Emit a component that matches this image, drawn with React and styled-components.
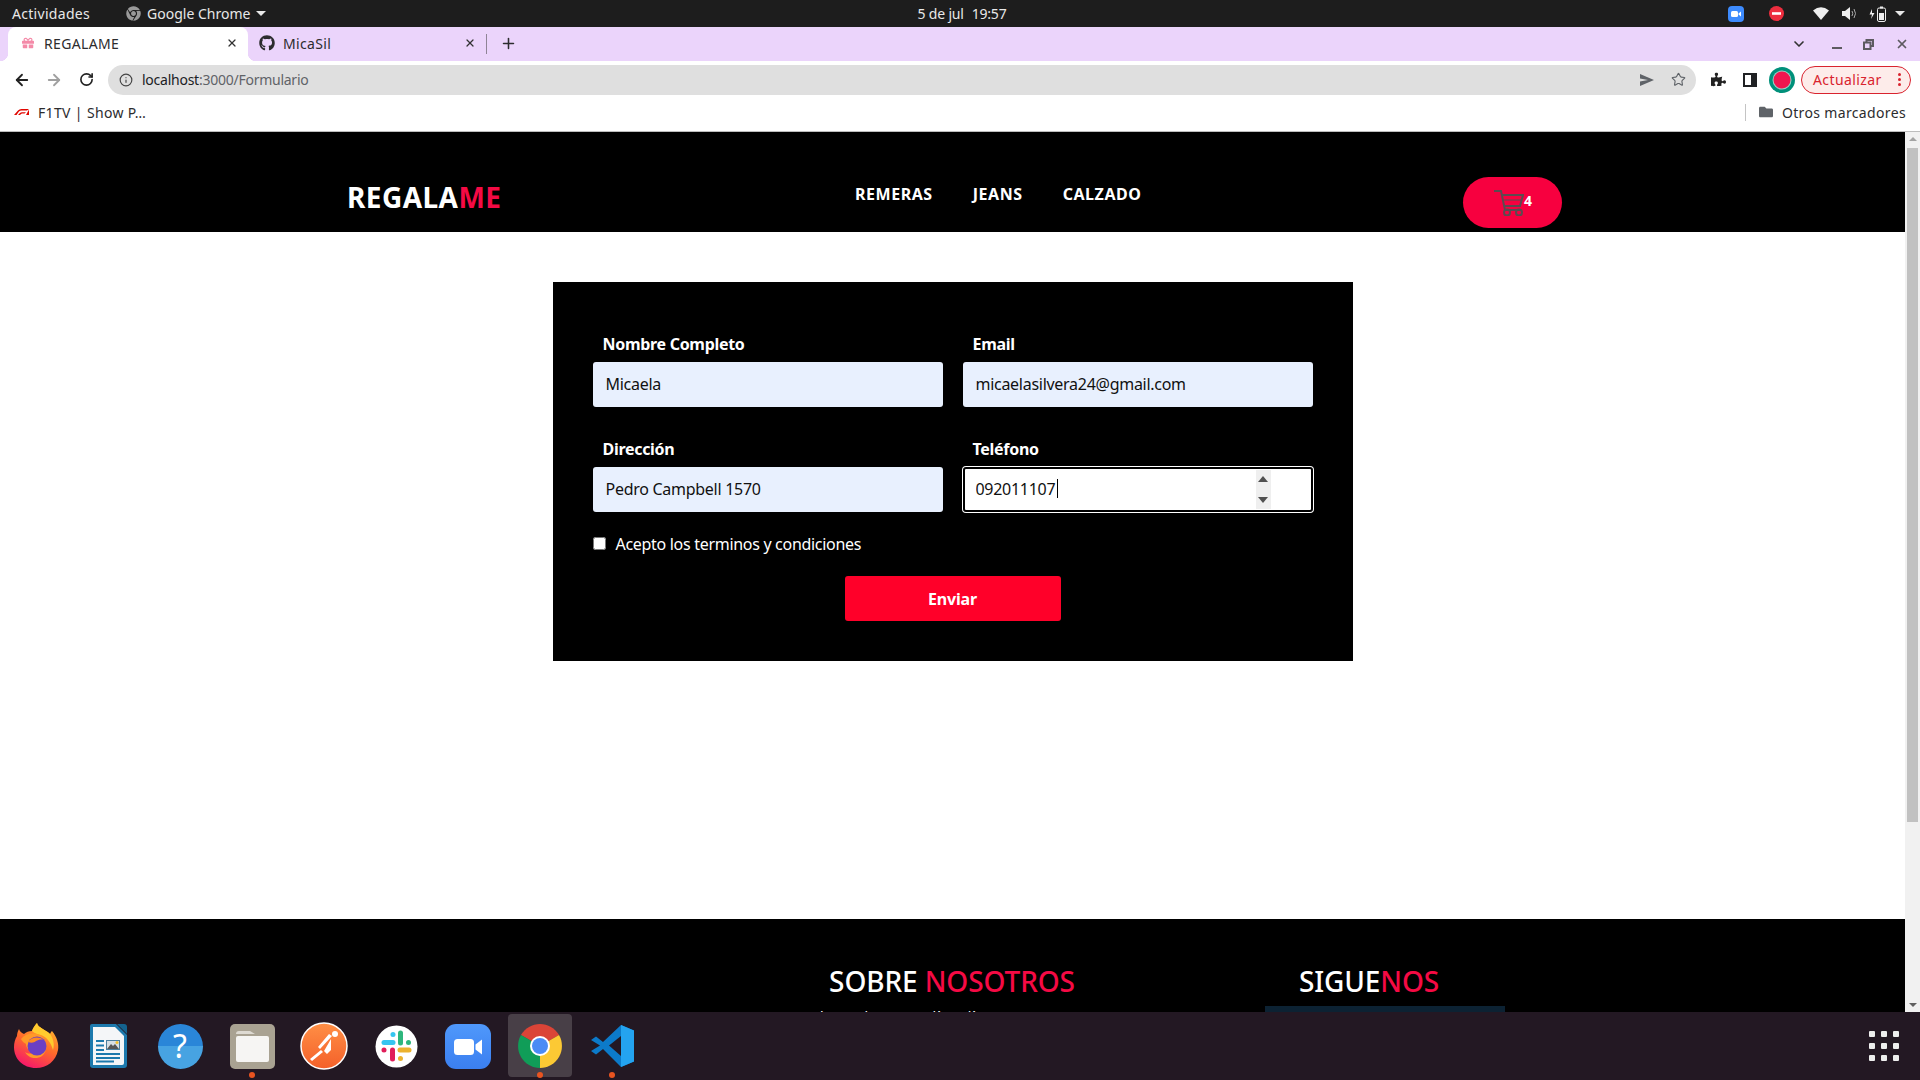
import React from "react";
import styled, { createGlobalStyle } from "styled-components";
import { ArrowLeft, ArrowRight, RotateCw, Info, Star, X, Plus, ChevronDown } from "lucide-react";
import { FaGithub, FaGift, FaFolder, FaPuzzlePiece, FaChrome } from "react-icons/fa";

const UI_FONT = `"Noto Sans", "Liberation Sans", sans-serif`;

const GlobalStyle = createGlobalStyle`
  html, body {
    margin: 0;
    padding: 0;
    overflow: hidden;
    background: #fff;
  }
  * {
    box-sizing: border-box;
  }
`;

const Screen = styled.div`
  width: 1920px;
  height: 1080px;
  display: flex;
  flex-direction: column;
  overflow: hidden;
  font-family: ${UI_FONT};
`;

/* system top bar */
const TopBar = styled.div`
  height: 27px;
  flex: none;
  display: flex;
  align-items: center;
  background: #1d1d1d;
  color: #e8e8e8;
  font-size: 14px;
  padding-left: 12px;
`;

const Activities = styled.span`
  letter-spacing: 0.3px;
`;

const AppMenu = styled.div`
  display: flex;
  align-items: center;
  gap: 6px;
  margin-left: 36px;
  width: 150px;
`;

const Clock = styled.div`
  margin-left: 616px;
  width: 140px;
  display: flex;
  justify-content: center;
  gap: 8px;
  letter-spacing: -0.2px;
  white-space: pre;
`;

const TrayGroup = styled.div`
  margin-left: auto;
  display: flex;
  align-items: center;
  height: 100%;
`;

const TraySlot = styled.div`
  width: ${(p) => p.$w}px;
  display: flex;
  justify-content: center;
  align-items: center;
`;

const Caret = styled.span`
  display: inline-block;
  width: 0;
  height: 0;
  border-left: 5px solid transparent;
  border-right: 5px solid transparent;
  border-top: 5px solid #e8e8e8;
`;

/* chrome tab strip */
const TabStrip = styled.div`
  height: 34px;
  flex: none;
  display: flex;
  align-items: stretch;
  background: #ebd4fb;
  padding-left: 8px;
  color: #2c2c2e;
`;

const Tab = styled.div`
  position: relative;
  display: flex;
  align-items: center;
  gap: 8px;
  width: ${(p) => (p.$active ? 240 : 238)}px;
  padding: 0 10px 2px ${(p) => (p.$active ? 12 : 11)}px;
  font-size: 14px;
  letter-spacing: 0.35px;
  background: ${(p) => (p.$active ? "#fff" : "transparent")};
  border-radius: 8px 8px 0 0;

  ${(p) =>
    p.$active &&
    `
    &::before, &::after {
      content: "";
      position: absolute;
      bottom: 0;
      width: 8px;
      height: 8px;
    }
    &::before {
      left: -8px;
      background: radial-gradient(circle at 0 0, #ebd4fb 8px, #fff 8.5px);
    }
    &::after {
      right: -8px;
      background: radial-gradient(circle at 100% 0, #ebd4fb 8px, #fff 8.5px);
    }
  `}
`;

const TabIcon = styled.span`
  width: 16px;
  display: flex;
  justify-content: center;
  color: ${(p) => p.$color || "#2c2c2e"};
`;

const TabClose = styled.span`
  margin-left: auto;
  display: flex;
  color: #333;
`;

const TabSeparator = styled.div`
  width: 1px;
  height: 20px;
  align-self: center;
  background: #8f8496;
`;

const NewTab = styled.div`
  margin-left: 13px;
  padding-bottom: 2px;
  display: flex;
  align-items: center;
  color: #2c2c2e;
`;

const WindowControls = styled.div`
  margin-left: auto;
  display: flex;
  align-items: center;
  color: #5d5a60;
`;

const WindowButton = styled.div`
  width: ${(p) => p.$w}px;
  display: flex;
  justify-content: center;
  align-items: center;
`;

/* chrome toolbar */
const Toolbar = styled.div`
  height: 37px;
  flex: none;
  display: flex;
  align-items: center;
  background: #fff;
  padding: 0 9px 0 6px;
`;

const ToolButton = styled.div`
  width: 32px;
  display: flex;
  justify-content: center;
  align-items: center;
  color: ${(p) => p.$color || "#222"};
`;

const Omnibox = styled.div`
  flex: 1;
  height: 30px;
  margin: 0 6px;
  display: flex;
  align-items: center;
  padding: 0 10px 0 11px;
  background: #dfdfdf;
  border-radius: 15px;
  font-size: 14px;
  letter-spacing: -0.25px;
  color: #5f6368;
`;

const Host = styled.span`
  color: #202124;
  margin-left: 9px;
`;

const OmniActions = styled.div`
  margin-left: auto;
  display: flex;
  align-items: center;
  gap: 17px;
  color: #5f6368;
`;

const UpdatePill = styled.div`
  margin-left: 3px;
  width: 110px;
  height: 28px;
  display: flex;
  align-items: center;
  justify-content: space-between;
  padding: 0 9px 0 11px;
  border: 1px solid #d9232e;
  border-radius: 14px;
  background: #fdecea;
  color: #d9232e;
  font-size: 14px;
  letter-spacing: 0.4px;
`;

const PillDots = styled.span`
  display: flex;
  flex-direction: column;
  gap: 2px;

  i {
    display: block;
    width: 3px;
    height: 3px;
    border-radius: 50%;
    background: #d9232e;
  }
`;

/* bookmarks bar */
const BookmarkBar = styled.div`
  height: 34px;
  flex: none;
  display: flex;
  align-items: center;
  padding: 0 14px 5px;
  background: #fff;
  border-bottom: 1px solid #bdbdbd;
  font-size: 14px;
  letter-spacing: 0.35px;
  color: #2c2c2e;
`;

const BookmarkLabel = styled.span`
  margin-left: 9px;
`;

const OtherBookmarks = styled.div`
  margin-left: auto;
  display: flex;
  align-items: center;
  gap: 9px;
  color: #5f6368;

  span {
    color: #2c2c2e;
  }
`;

const BarDivider = styled.div`
  width: 1px;
  height: 17px;
  margin-right: 4px;
  background: #c4c4c4;
`;

/* page area */
const Viewport = styled.div`
  flex: 1;
  min-height: 0;
  display: flex;
`;

const Page = styled.div`
  flex: 1;
  min-width: 0;
  overflow: hidden;
  background: #fff;
`;

const NavBar = styled.nav`
  height: 100px;
  display: flex;
  align-items: flex-start;
  background: #000;
  padding: 0 343px 0 347px;
`;

const Logo = styled.div`
  margin-top: 48px;
  width: 156px;
  font-size: 28px;
  line-height: 34px;
  font-weight: 700;
  letter-spacing: 0.45px;
  color: #fff;
  white-space: nowrap;
`;

const Accent = styled.span`
  color: #f50a44;
`;

const Menu = styled.ul`
  list-style: none;
  display: flex;
  gap: 40px;
  margin: 50px 0 0 352px;
  padding: 0;
  font-size: 16px;
  line-height: 24px;
  font-weight: 700;
  letter-spacing: 0.55px;
  color: #fff;
`;

const CartButton = styled.button`
  margin: 45px 0 0 auto;
  width: 99px;
  height: 51px;
  display: flex;
  align-items: center;
  justify-content: center;
  padding: 0 0 0 1px;
  border: 0;
  border-radius: 26px;
  background: #f7003f;
  color: #fff;
  font-family: inherit;
`;

const CartCount = styled.span`
  margin: 0 0 3px 0;
  font-size: 14px;
  line-height: 14px;
  font-weight: 700;
`;

const Content = styled.main`
  height: 687px;
  padding-top: 50px;
  display: flex;
  justify-content: center;
  align-items: flex-start;
`;

const FormCard = styled.form`
  width: 800px;
  display: grid;
  grid-template-columns: 350px 350px;
  column-gap: 20px;
  row-gap: 30px;
  padding: 50px 40px 40px;
  background: #000;
`;

const Field = styled.div`
  display: flex;
  flex-direction: column;
  position: relative;
`;

const FieldLabel = styled.label`
  padding-left: 10px;
  margin-bottom: 6px;
  font-size: 16px;
  line-height: 24px;
  font-weight: 700;
  letter-spacing: -0.3px;
  color: #fff;
`;

const TextInput = styled.input`
  width: 100%;
  height: 45px;
  padding: 0 13px 2px;
  border: 0;
  border-radius: 3px;
  background: #e8f0fe;
  color: #111;
  font-family: inherit;
  font-size: 16px;
  letter-spacing: -0.28px;
  outline: none;

  ${(p) =>
    p.$focused &&
    `
    background: #fff;
    border: 2px solid #000;
    padding: 0 11px 2px;
    box-shadow: 0 0 0 1px #fff;
  `}
`;

const TextCaret = styled.span`
  position: absolute;
  left: 94px;
  bottom: 14px;
  width: 1px;
  height: 19px;
  background: #000;
`;

const Spinner = styled.div`
  position: absolute;
  right: 42px;
  bottom: 3px;
  width: 15px;
  height: 39px;
  display: flex;
  flex-direction: column;
  justify-content: space-between;
  align-items: center;
  padding: 6px 0;
  background: #efefef;
`;

const SpinArrow = styled.span`
  width: 0;
  height: 0;
  border-left: 5px solid transparent;
  border-right: 5px solid transparent;
  ${(p) => (p.$down ? "border-top: 6px solid #505050;" : "border-bottom: 6px solid #505050;")}
`;

const TermsRow = styled.label`
  grid-column: 1 / -1;
  margin-top: -10px;
  height: 24px;
  display: flex;
  align-items: center;
  gap: 10px;
  font-size: 16px;
  letter-spacing: -0.3px;
  color: #fff;

  input {
    width: 13px;
    height: 13px;
    margin: -2px 0 0;
  }
`;

const SubmitButton = styled.button`
  grid-column: 1 / -1;
  justify-self: center;
  margin-top: -10px;
  width: 216px;
  height: 45px;
  border: 0;
  border-radius: 3px;
  background: #ff0029;
  color: #fff;
  font-family: inherit;
  font-size: 16px;
  font-weight: 700;
  letter-spacing: -0.2px;
`;

const Footer = styled.footer`
  height: 300px;
  display: grid;
  grid-template-columns: 802px 300px 534px;
  padding-top: 44px;
  background: #000;
  color: #fff;
`;

const FooterColumn = styled.div`
  grid-column: ${(p) => p.$col};
  display: flex;
  flex-direction: column;
`;

const FooterTitle = styled.h2`
  margin: 0;
  font-size: 28px;
  line-height: 37px;
  font-weight: 500;
  letter-spacing: -0.1px;
  text-align: center;
  white-space: nowrap;
`;

const FooterText = styled.p`
  margin: 7px 0 0 18px;
  font-size: 14px;
  line-height: 20px;
`;

const SocialBox = styled.div`
  margin: 6px 0 0 163px;
  width: 240px;
  height: 120px;
  background: #0c2233;
`;

const ScrollTrack = styled.div`
  width: 15px;
  flex: none;
  display: flex;
  flex-direction: column;
  align-items: center;
  padding-top: 5px;
  background: #f1f1f1;
`;

const ScrollThumb = styled.div`
  width: 11px;
  height: 674px;
  margin-top: 7px;
  background: #c1c1c1;
`;

const ScrollArrow = styled.span`
  width: 0;
  height: 0;
  border-left: 4px solid transparent;
  border-right: 4px solid transparent;
  ${(p) =>
    p.$down
      ? "border-top: 4px solid #606060; margin-top: auto; margin-bottom: 5px;"
      : "border-bottom: 4px solid #a3a3a3;"}
`;

/* dock */
const Dock = styled.div`
  height: 68px;
  flex: none;
  display: flex;
  align-items: stretch;
  background: #231823;
`;

const DockSlot = styled.div`
  position: relative;
  width: 72px;
  display: flex;
  align-items: center;
  justify-content: center;

  ${(p) =>
    p.$current &&
    `
    &::before {
      content: "";
      position: absolute;
      left: 4px;
      right: 4px;
      top: 2px;
      bottom: 3px;
      border-radius: 4px;
      background: #483f47;
    }
  `}

  svg, div {
    position: relative;
  }
`;

const RunDot = styled.span`
  position: absolute;
  bottom: 2px;
  left: 33px;
  width: 6px;
  height: 6px;
  border-radius: 50%;
  background: #e95420;
`;

const AppGrid = styled.div`
  margin: 19px 21px 0 auto;
  display: grid;
  grid-template-columns: repeat(3, 6px);
  grid-auto-rows: 6px;
  gap: 6px;

  i {
    display: block;
    border-radius: 1px;
    background: #eee;
  }
`;

const HelpBadge = styled.div`
  width: 45px;
  height: 45px;
  border-radius: 50%;
  display: flex;
  align-items: center;
  justify-content: center;
  background: linear-gradient(#2a86d8 0 50%, #47a3e2 50%);
  color: #fff;
  font-size: 32px;
  line-height: 1;
`;

const CartIcon = () => (
  <svg width="30" height="26" viewBox="0 0 30 26" fill="none" stroke="#5b4a50" strokeWidth="2">
    <path d="M0 1h7l4 19h15" />
    <path d="M8 5h21l-3 11H10.500" />
    <path d="M9 10h19" strokeWidth="1" />
    <circle cx="13" cy="22.500" r="3" />
    <circle cx="25" cy="22.500" r="3" />
  </svg>
);

const F1Logo = () => (
  <svg width="15" height="6" viewBox="0 0 30 12" fill="#e10600">
    <path d="M0 12 8 3Q10.500 0 15 0h15l-4 3H15q-3 0-5 2l-5 7z" />
    <path d="M8 12l4-4q1.500-1.500 4-1.500h8l-3 2.500h-5q-1 0-2 1l-2 2z" />
    <path d="M24 12 30 1v11z" />
  </svg>
);

const TrayZoom = () => (
  <svg width="16" height="16" viewBox="0 0 16 16">
    <rect width="16" height="16" rx="4" fill="#3d8bfd" />
    <rect x="3" y="5" width="7" height="6" rx="1.500" fill="#fff" />
    <path d="M10.500 7.500 13 5.500v5l-2.500-2z" fill="#fff" />
  </svg>
);

const TrayBlock = () => (
  <svg width="15" height="15" viewBox="0 0 15 15">
    <circle cx="7.500" cy="7.500" r="7.500" fill="#ed2d3e" />
    <rect x="3" y="6.200" width="9" height="2.600" fill="#fff" />
  </svg>
);

const TrayWifi = () => (
  <svg width="16" height="13" viewBox="0 0 16 13" fill="#eee">
    <path d="M0 3.500Q8-3 16 3.500L8 13z" />
  </svg>
);

const TrayVolume = () => (
  <svg width="15" height="13" viewBox="0 0 15 13">
    <path d="M0 4h3l5-4v13l-5-4H0z" fill="#eee" />
    <path d="M10 4q1.500 2.500 0 5M12 2q3 4.500 0 9" stroke="#aaa" strokeWidth="1" fill="none" />
  </svg>
);

const TrayBattery = () => (
  <svg width="17" height="16" viewBox="0 0 17 16">
    <path d="M3 3 0.500 8.500H3L2 13 5.500 7H3z" fill="#eee" />
    <rect x="8.500" y="2" width="8" height="13.500" rx="1.500" fill="none" stroke="#eee" />
    <rect x="11" y="0.500" width="3" height="2" fill="#eee" />
    <rect x="10" y="7" width="5" height="7" fill="#eee" />
  </svg>
);

const SendIcon = () => (
  <svg width="14" height="12" viewBox="0 0 14 12" fill="#5f6368">
    <path d="M0 0 14 6 0 12V7.500L8 6 0 4.500z" />
  </svg>
);

const SidePanelIcon = () => (
  <svg width="14" height="14" viewBox="0 0 14 14">
    <path d="M0 0h14v14H0z" fill="#202124" />
    <path d="M2 2h6v10H2z" fill="#fff" />
  </svg>
);

const Avatar = () => (
  <svg width="26" height="26" viewBox="0 0 26 26">
    <circle cx="13" cy="13" r="13" fill="#00907a" />
    <circle cx="13" cy="13" r="9.500" fill="#fff" opacity="0.6" />
    <circle cx="13" cy="13" r="8.500" fill="#f0164f" />
  </svg>
);

const RestoreIcon = () => (
  <svg width="11" height="11" viewBox="0 0 11 11" fill="none" stroke="#5d5a60" strokeWidth="2">
    <path d="M3.500 3V1h6.500v6H8" />
    <rect x="1" y="3.500" width="6.500" height="6.500" />
  </svg>
);

const MinimizeIcon = () => (
  <svg width="11" height="11" viewBox="0 0 11 11">
    <rect x="0" y="8" width="10" height="2" fill="#5d5a60" />
  </svg>
);

const FirefoxIcon = () => (
  <svg width="46" height="46" viewBox="0 0 46 46">
    <defs>
      <linearGradient id="ffBody" x1="0.800" y1="0" x2="0.300" y2="1">
        <stop offset="0" stopColor="#ffbd2e" />
        <stop offset="0.500" stopColor="#ff6a2b" />
        <stop offset="1" stopColor="#f5156c" />
      </linearGradient>
    </defs>
    <path
      d="M24 0c1 5 8 6 13 11 1-2 1-2 2-3 5 6 7 13 6 19-2 11-11 18-22 18C10 45 1 36 1 24c0-4 1-8 3-11 0-3 1-5 2-7 1 3 3 4 5 5 2-2 5-3 8-3 1-3 3-6 5-8z"
      fill="url(#ffBody)"
    />
    <path d="M24 0c1 5 8 6 13 11 3 4 5 10 3 16-2-7-6-13-12-15-3-1-6-1-9-4 1-3 3-6 5-8z" fill="#ffcb2e" />
    <path d="M8 16c5-6 14-7 20-3 7 5 7 15 1 20-6 4-14 2-17-4 3 2 7 2 9 0-5-1-8-4-8-8-2-1-4-3-5-5z" fill="#ff9a28" />
    <circle cx="24" cy="23" r="9.500" fill="#6b3fc4" />
    <path d="M15 19c3-5 11-6 16-2-3-1-6 0-8 1-2 2-5 2-8 1z" fill="#ff8a22" />
  </svg>
);

const WriterIcon = () => (
  <svg width="37" height="44" viewBox="0 0 37 44">
    <path d="M2 0h24l11 11v30a3 3 0 0 1-3 3H3a3 3 0 0 1-3-3V2a2 2 0 0 1 2-2z" fill="#1c79ad" />
    <path d="M3 3h22l9 9v27a2 2 0 0 1-2 2H3z" fill="#f4f6f8" />
    <path d="M27 0h7a3 3 0 0 1 3 3v7z" fill="#14638f" />
    <g fill="#1c79ad">
      <rect x="6" y="16" width="8" height="2" />
      <rect x="6" y="20.500" width="8" height="2" />
      <rect x="6" y="25" width="8" height="2" />
      <rect x="6" y="29" width="24" height="2" />
      <rect x="6" y="33" width="24" height="2" />
      <rect x="6" y="36.500" width="18" height="2" />
    </g>
    <rect x="16" y="16" width="14" height="10" fill="#4c7f9e" />
    <rect x="17" y="17" width="12" height="8" fill="#d5dee4" />
    <path d="M17 25l4-5 2 2 2-2 4 5z" fill="#555" />
    <circle cx="27" cy="18.500" r="1.500" fill="#f3c02c" />
  </svg>
);

const FilesIcon = () => (
  <svg width="45" height="45" viewBox="0 0 45 45">
    <rect width="45" height="45" rx="5" fill="#a9a292" />
    <path d="M6 10a3 3 0 0 1 3-3h11l5 3z" fill="#dedad2" />
    <rect x="6" y="12" width="33" height="26" rx="2" fill="#f6f5f3" />
  </svg>
);

const PostmanIcon = () => (
  <svg width="48" height="48" viewBox="0 0 48 48">
    <defs>
      <linearGradient id="pmBody" x1="0" y1="0" x2="0" y2="1">
        <stop offset="0" stopColor="#ff8f45" />
        <stop offset="1" stopColor="#f4602a" />
      </linearGradient>
    </defs>
    <circle cx="24" cy="24" r="23" fill="url(#pmBody)" stroke="#fff" strokeWidth="1.500" />
    <circle cx="35" cy="12" r="3" fill="#fff" />
    <path d="M32 14 20 27l-2-2L29 12zM21 28l2 2-11 9 -2-2zM24 29l7-12 0 11-4 4z" fill="#fff" />
  </svg>
);

const SlackIcon = () => (
  <svg width="43" height="43" viewBox="0 0 43 43">
    <circle cx="21.500" cy="21.500" r="21" fill="#fff" />
    <g strokeWidth="5" strokeLinecap="round" fill="none">
      <path d="M9 17.500h9" stroke="#36c5f0" />
      <path d="M18 9.500h-.01" stroke="#36c5f0" />
      <path d="M25.500 8v10" stroke="#2eb67d" />
      <path d="M33.500 17.500h-.01" stroke="#2eb67d" />
      <path d="M25 25h9" stroke="#ecb22e" />
      <path d="M25.500 33.500h-.01" stroke="#ecb22e" />
      <path d="M17.500 25v9" stroke="#e01e5a" />
      <path d="M9 25h-.01" stroke="#e01e5a" />
    </g>
  </svg>
);

const ZoomIcon = () => (
  <svg width="46" height="45" viewBox="0 0 46 45">
    <defs>
      <linearGradient id="zmBody" x1="0" y1="0" x2="0" y2="1">
        <stop offset="0" stopColor="#4f98fb" />
        <stop offset="1" stopColor="#3b7ff0" />
      </linearGradient>
    </defs>
    <rect width="46" height="45" rx="11" fill="url(#zmBody)" />
    <rect x="9" y="15" width="20" height="16" rx="3.500" fill="#fff" />
    <path d="M30.500 20.500 37 15.500v15l-6.500-5z" fill="#fff" />
  </svg>
);

const ChromeIcon = () => (
  <svg width="44" height="44" viewBox="0 0 44 44">
    <path d="M22 22 3 11A22 22 0 0 1 41 11z" fill="#db4437" />
    <path d="M22 22 41 11A22 22 0 0 1 22 44z" fill="#fcc934" />
    <path d="M22 22 22 44A22 22 0 0 1 3 11z" fill="#109d58" />
    <circle cx="22" cy="22" r="10" fill="#fff" />
    <circle cx="22" cy="22" r="8" fill="#4b8bf5" />
  </svg>
);

const VSCodeIcon = () => (
  <svg width="43" height="42" viewBox="0 0 43 42">
    <path d="M30 0 43 5.500v31L30 42 12 24l-7 5.500L0 26l9-5.500L0 15l5-3.500 7 5.500z" fill="#0c7ac9" />
    <path d="M30 0 43 5.500v31L30 42z" fill="#24a3f0" />
    <path d="M30 11 18 20.500 30 31z" fill="#231823" />
  </svg>
);

const TabRow = ({ icon, color, title, active }) => (
  <Tab $active={active}>
    <TabIcon $color={color}>{icon}</TabIcon>
    {title}
    <TabClose>
      <X size={12} strokeWidth={2.5} />
    </TabClose>
  </Tab>
);

const App = () => (
  <Screen>
    <GlobalStyle />
    <TopBar>
      <Activities>Actividades</Activities>
      <AppMenu>
        <FaChrome size={15} color="#9a9a9a" />
        Google Chrome
        <Caret />
      </AppMenu>
      <Clock>
        <span>5 de jul</span>
        <span>19:57</span>
      </Clock>
      <TrayGroup>
        <TraySlot $w={40}>
          <TrayZoom />
        </TraySlot>
        <TraySlot $w={40}>
          <TrayBlock />
        </TraySlot>
        <TraySlot $w={11} />
        <TraySlot $w={28}>
          <TrayWifi />
        </TraySlot>
        <TraySlot $w={28}>
          <TrayVolume />
        </TraySlot>
        <TraySlot $w={28}>
          <TrayBattery />
        </TraySlot>
        <TraySlot $w={18}>
          <Caret />
        </TraySlot>
        <TraySlot $w={11} />
      </TrayGroup>
    </TopBar>

    <TabStrip>
      <TabRow active icon={<FaGift size={12} />} color="#f48aa8" title="REGALAME" />
      <TabRow icon={<FaGithub size={16} />} title="MicaSil" />
      <TabSeparator />
      <NewTab>
        <Plus size={17} strokeWidth={2.2} />
      </NewTab>
      <WindowControls>
        <WindowButton $w={46}>
          <ChevronDown size={16} strokeWidth={2.5} color="#333" />
        </WindowButton>
        <WindowButton $w={30}>
          <MinimizeIcon />
        </WindowButton>
        <WindowButton $w={32}>
          <RestoreIcon />
        </WindowButton>
        <WindowButton $w={36}>
          <X size={14} strokeWidth={3} />
        </WindowButton>
      </WindowControls>
    </TabStrip>

    <Toolbar>
      <ToolButton>
        <ArrowLeft size={18} strokeWidth={2.4} />
      </ToolButton>
      <ToolButton $color="#a0a0a0">
        <ArrowRight size={18} strokeWidth={2.4} />
      </ToolButton>
      <ToolButton>
        <RotateCw size={15} strokeWidth={2.6} />
      </ToolButton>
      <Omnibox>
        <Info size={14} color="#444" />
        <Host>localhost</Host>:3000/Formulario
        <OmniActions>
          <SendIcon />
          <Star size={15} strokeWidth={1.8} />
        </OmniActions>
      </Omnibox>
      <ToolButton>
        <FaPuzzlePiece size={15} />
      </ToolButton>
      <ToolButton>
        <SidePanelIcon />
      </ToolButton>
      <ToolButton>
        <Avatar />
      </ToolButton>
      <UpdatePill>
        Actualizar
        <PillDots>
          <i />
          <i />
          <i />
        </PillDots>
      </UpdatePill>
    </Toolbar>

    <BookmarkBar>
      <F1Logo />
      <BookmarkLabel>F1TV | Show P…</BookmarkLabel>
      <OtherBookmarks>
        <BarDivider />
        <FaFolder size={14} />
        <span>Otros marcadores</span>
      </OtherBookmarks>
    </BookmarkBar>

    <Viewport>
      <Page>
        <NavBar>
          <Logo>
            REGALA<Accent>ME</Accent>
          </Logo>
          <Menu>
            <li>REMERAS</li>
            <li>JEANS</li>
            <li>CALZADO</li>
          </Menu>
          <CartButton type="button">
            <CartIcon />
            <CartCount>4</CartCount>
          </CartButton>
        </NavBar>

        <Content>
          <FormCard>
            <Field>
              <FieldLabel>Nombre Completo</FieldLabel>
              <TextInput defaultValue="Micaela" />
            </Field>
            <Field>
              <FieldLabel>Email</FieldLabel>
              <TextInput defaultValue="micaelasilvera24@gmail.com" />
            </Field>
            <Field>
              <FieldLabel>Dirección</FieldLabel>
              <TextInput defaultValue="Pedro Campbell 1570" />
            </Field>
            <Field>
              <FieldLabel>Teléfono</FieldLabel>
              <TextInput $focused defaultValue="092011107" />
              <TextCaret />
              <Spinner>
                <SpinArrow />
                <SpinArrow $down />
              </Spinner>
            </Field>
            <TermsRow>
              <input type="checkbox" />
              Acepto los terminos y condiciones
            </TermsRow>
            <SubmitButton type="button">Enviar</SubmitButton>
          </FormCard>
        </Content>

        <Footer>
          <FooterColumn $col={2}>
            <FooterTitle>
              SOBRE <Accent>NOSOTROS</Accent>
            </FooterTitle>
            <FooterText>lo que hacemos día a día</FooterText>
          </FooterColumn>
          <FooterColumn $col={3}>
            <FooterTitle>
              SIGUE<Accent>NOS</Accent>
            </FooterTitle>
            <SocialBox />
          </FooterColumn>
        </Footer>
      </Page>
      <ScrollTrack>
        <ScrollArrow />
        <ScrollThumb />
        <ScrollArrow $down />
      </ScrollTrack>
    </Viewport>

    <Dock>
      <DockSlot>
        <FirefoxIcon />
      </DockSlot>
      <DockSlot>
        <WriterIcon />
      </DockSlot>
      <DockSlot>
        <HelpBadge>?</HelpBadge>
      </DockSlot>
      <DockSlot>
        <FilesIcon />
        <RunDot />
      </DockSlot>
      <DockSlot>
        <PostmanIcon />
      </DockSlot>
      <DockSlot>
        <SlackIcon />
      </DockSlot>
      <DockSlot>
        <ZoomIcon />
      </DockSlot>
      <DockSlot $current>
        <ChromeIcon />
        <RunDot />
      </DockSlot>
      <DockSlot>
        <VSCodeIcon />
        <RunDot />
      </DockSlot>
      <AppGrid>
        {Array.from({ length: 9 }, (_, i) => (
          <i key={i} />
        ))}
      </AppGrid>
    </Dock>
  </Screen>
);

export default App;
